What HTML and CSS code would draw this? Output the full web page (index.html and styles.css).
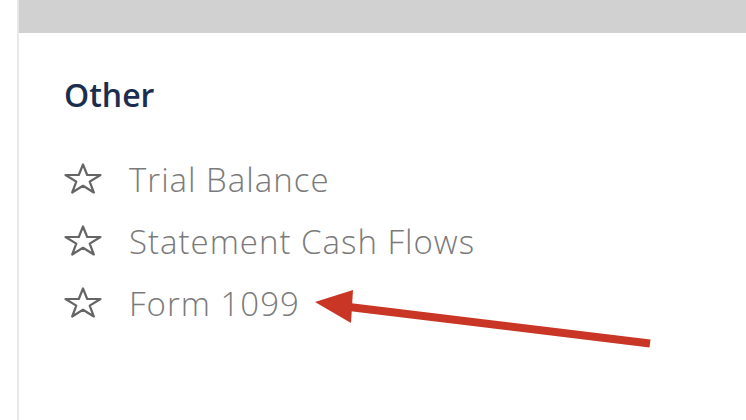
FILE: index.html
```html
<!DOCTYPE html>
<html lang="en">
<head>
    <meta charset="UTF-8">
    <meta name="viewport" content="width=device-width, initial-scale=1.0">
    <title>Reports - Other</title>
    <link rel="stylesheet" href="styles.css">
</head>
<body>
    <div class="panel">
        <div class="panel-top"></div>

        <div class="panel-body">
            <h2 class="group-title">Other</h2>

            <ul class="report-list">
                <li class="report-item">
                    <svg class="star" width="38" height="31" viewBox="0 0 38 31"><path d="M19 1.5 L23.2 12 L36.5 12 L25.7 18.6 L29.8 29.5 L19 22.8 L8.2 29.5 L12.3 18.6 L1.5 12 L14.8 12 Z"/></svg>
                    <span>Trial Balance</span>
                </li>
                <li class="report-item">
                    <svg class="star" width="38" height="31" viewBox="0 0 38 31"><path d="M19 1.5 L23.2 12 L36.5 12 L25.7 18.6 L29.8 29.5 L19 22.8 L8.2 29.5 L12.3 18.6 L1.5 12 L14.8 12 Z"/></svg>
                    <span>Statement Cash Flows</span>
                </li>
                <li class="report-item">
                    <svg class="star" width="38" height="31" viewBox="0 0 38 31"><path d="M19 1.5 L23.2 12 L36.5 12 L25.7 18.6 L29.8 29.5 L19 22.8 L8.2 29.5 L12.3 18.6 L1.5 12 L14.8 12 Z"/></svg>
                    <span>Form 1099</span>
                </li>
            </ul>
        </div>
    </div>

    <!-- annotation arrow pointing at Form 1099 -->
    <svg class="arrow" width="746" height="420" viewBox="0 0 746 420">
        <line x1="650" y1="343.5" x2="345" y2="306.5" stroke="#c93626" stroke-width="8"/>
        <polygon points="315,302 353,290 351,323" fill="#c93626"/>
    </svg>
</body>
</html>
```

FILE: styles.css
```css
html, body {
    margin: 0;
    height: 100%;
}

body {
    font-family: 'Open Sans', 'Liberation Sans', sans-serif;
    background: #fff;
    padding-left: 17px;
    box-sizing: border-box;
    overflow: hidden;
}

.panel {
    height: 100%;
    border-left: 2px solid #e8e8e8;
}

.panel-top {
    height: 33px;
    background-color: #d1d1d1;
}

.panel-body {
    padding: 42px 0 0 45px;
}

.group-title {
    margin: 0;
    font-size: 32px;
    font-weight: 600;
    line-height: 40px;
    color: #1b2e4e;
}

.report-list {
    list-style: none;
    margin: 32px 0 0;
    padding: 0;
}

.report-item {
    display: flex;
    align-items: center;
    gap: 27px;
    height: 62px;
    font-size: 33px;
    font-weight: 300;
    letter-spacing: 1px;
    color: #7a7a7a;
}

.report-item span {
    padding-top: 3px;
}

.star {
    flex: none;
    fill: none;
    stroke: #656565;
    stroke-width: 2.2;
    stroke-linejoin: round;
}

.arrow {
    position: absolute;
    top: 0;
    left: 0;
    pointer-events: none;
}
```
